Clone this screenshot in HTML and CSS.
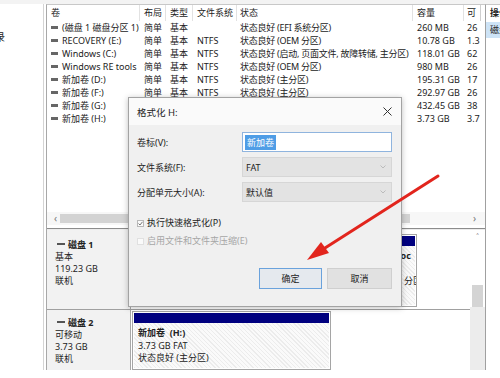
FILE: index.html
```html
<!DOCTYPE html>
<html lang="zh-CN">
<head>
<meta charset="utf-8">
<title>磁盘管理</title>
<link rel="stylesheet" href="styles.css">
</head>
<body>
<div class="topstrip"></div>
<div class="app">
  <aside class="nav"><span class="nav-text">录</span></aside>
  <main class="main">
    <section class="vols">
      <div class="grid head">
        <div class="c">卷</div><div class="c">布局</div><div class="c">类型</div><div class="c">文件系统</div><div class="c">状态</div><div class="c">容量</div><div class="c narrow">可</div>
      </div>
      <div class="grid row"><div class="c"><i class="vdash"></i>(磁盘 1 磁盘分区 1)</div><div class="c">简单</div><div class="c">基本</div><div class="c"></div><div class="c st">状态良好 (EFI 系统分区)</div><div class="c">260 MB</div><div class="c narrow">26</div></div>
      <div class="grid row"><div class="c"><i class="vdash"></i>RECOVERY (E:)</div><div class="c">简单</div><div class="c">基本</div><div class="c">NTFS</div><div class="c st">状态良好 (OEM 分区)</div><div class="c">10.78 GB</div><div class="c narrow">1.3</div></div>
      <div class="grid row"><div class="c"><i class="vdash"></i>Windows (C:)</div><div class="c">简单</div><div class="c">基本</div><div class="c">NTFS</div><div class="c st">状态良好 (启动, 页面文件, 故障转储, 主分区)</div><div class="c">118.01 GB</div><div class="c narrow">62</div></div>
      <div class="grid row"><div class="c"><i class="vdash"></i>Windows RE tools</div><div class="c">简单</div><div class="c">基本</div><div class="c">NTFS</div><div class="c st">状态良好 (OEM 分区)</div><div class="c">980 MB</div><div class="c narrow">26</div></div>
      <div class="grid row"><div class="c"><i class="vdash"></i>新加卷 (D:)</div><div class="c">简单</div><div class="c">基本</div><div class="c">NTFS</div><div class="c st">状态良好 (主分区)</div><div class="c">195.31 GB</div><div class="c narrow">17</div></div>
      <div class="grid row"><div class="c"><i class="vdash"></i>新加卷 (F:)</div><div class="c">简单</div><div class="c">基本</div><div class="c">NTFS</div><div class="c st">状态良好 (主分区)</div><div class="c">292.97 GB</div><div class="c narrow">26</div></div>
      <div class="grid row"><div class="c"><i class="vdash"></i>新加卷 (G:)</div><div class="c">简单</div><div class="c">基本</div><div class="c">NTFS</div><div class="c st">状态良好 (主分区)</div><div class="c">432.45 GB</div><div class="c narrow">38</div></div>
      <div class="grid row"><div class="c"><i class="vdash"></i>新加卷 (H:)</div><div class="c">简单</div><div class="c">基本</div><div class="c">FAT</div><div class="c st">状态良好 (主分区)</div><div class="c">3.73 GB</div><div class="c narrow">3.7</div></div>
    </section>
    <div class="hscroll"><span class="harr">‹</span><div class="hthumb"></div><span class="hspace"></span><span class="harr">›</span></div>
    <div class="split"></div>
    <section class="disks">
      <div class="disklist">
        <div class="disk d1">
          <div class="dlabel"><div class="dname"><i class="ddash"></i>磁盘 1</div><div>基本</div><div>119.23 GB</div><div>联机</div></div>
          <div class="parts">
            <div class="part pwide"><div class="pbar"></div><div class="pbody"><b>新加卷 (G:)</b><br>432.45 GB NTFS<br>状态良好 (主分区)</div></div>
            <div class="part pthin"><div class="pbar"></div><div class="pbody shift"><b>Doc</b><br>&nbsp;<br><span class="sh2">分区)</span></div></div>
          </div>
        </div>
        <div class="disk d2">
          <div class="dlabel"><div class="dname"><i class="ddash"></i>磁盘 2</div><div>可移动</div><div>3.73 GB</div><div>联机</div></div>
          <div class="parts">
            <div class="part pmain"><div class="pbar"></div><div class="pbody"><b>新加卷&nbsp; (H:)</b><br>3.73 GB FAT<br>状态良好 (主分区)</div></div>
          </div>
        </div>
      </div>
      <div class="vscroll"><span class="vup">˄</span><div class="vthumb"></div><div class="vfade"></div></div>
    </section>
  </main>
  <aside class="actions"><div class="ah">操作</div><div class="asel">磁盘管理</div></aside>
</div>

<div class="dialog">
  <div class="dtitle"><span>格式化 H:</span>
    <svg class="close" width="9" height="9" viewBox="0 0 9 9"><path d="M0.5 0.5 L8.5 8.5 M8.5 0.5 L0.5 8.5" stroke="#333" stroke-width="1" fill="none"/></svg>
  </div>
  <div class="dbody">
    <div class="field"><label>卷标(V):</label><div class="input"><span class="selected">新加卷</span></div></div>
    <div class="field"><label>文件系统(F):</label><div class="select"><span>FAT</span><svg width="6" height="4" viewBox="0 0 6 4"><path d="M0.5 0.5 L3 3 L5.5 0.5" stroke="#bbb" fill="none"/></svg></div></div>
    <div class="field"><label>分配单元大小(A):</label><div class="select"><span>默认值</span><svg width="6" height="4" viewBox="0 0 6 4"><path d="M0.5 0.5 L3 3 L5.5 0.5" stroke="#bbb" fill="none"/></svg></div></div>
    <div class="checks">
      <div class="chk"><span class="box on"><svg width="5" height="5" viewBox="0 0 5 5"><path d="M0.5 2.5 L2 4 L4.5 0.8" stroke="#555" fill="none" stroke-width="0.8"/></svg></span>执行快速格式化(P)</div>
      <div class="chk dis"><span class="box"></span>启用文件和文件夹压缩(E)</div>
    </div>
    <div class="btns"><button class="btn ok">确定</button><button class="btn cancel">取消</button></div>
  </div>
</div>

<svg class="arrow" width="500" height="378" viewBox="0 0 500 378">
  <line x1="438" y1="176" x2="325" y2="248" stroke="#e2251d" stroke-width="3" stroke-linecap="round"/>
  <polygon points="307,260 329,253 321,242" fill="#e2251d"/>
</svg>
</body>
</html>
```

FILE: styles.css
```css
body {
  margin: 0;
  width: 500px;
  height: 378px;
  overflow: hidden;
  background: #fff;
  font-family: "Noto Sans", "Noto Sans CJK SC", sans-serif;
  font-size: 9px;
  color: #222;
  position: relative;
}

.topstrip { height: 4px; background: #f3f3f3; }

.app { display: flex; height: 366px; }

.nav {
  width: 43px;
  flex: none;
  border-right: 1px solid #d4d4d4;
  margin-right: 2px;
  overflow: hidden;
}
.nav-text { display: block; margin: 26px 0 0 -5px; font-size: 10px; line-height: 14px; }

.main {
  flex: 0 0 439px;
  box-sizing: border-box;
  border-left: 1px solid #a8a8a8;
  border-top: 1px solid #c8c8c8;
  display: flex;
  flex-direction: column;
}

.vols { height: 207px; overflow: hidden; }
.grid { display: grid; grid-template-columns: 93px 26px 27px 44px 176px 51px 17px; }
.c {
  box-sizing: border-box;
  padding-left: 4px;
  white-space: nowrap;
  overflow: hidden;
}
.c.narrow { padding-left: 3px; }
.c.st { padding-left: 3px; letter-spacing: -0.25px; }
.head .c:nth-child(5) { padding-left: 3px; }
.head { height: 16px; }
.head .c { line-height: 16px; border-right: 1px solid #e2e2e2; }
.head .c.narrow { border-right: 1px solid #cfcfcf; }
.row { height: 13px; line-height: 13px; }
.vdash {
  display: inline-block;
  width: 7px;
  height: 3px;
  background: #666;
  margin-right: 4px;
  vertical-align: 2px;
}

.hscroll {
  height: 13px;
  display: flex;
  align-items: center;
  padding: 0 6px 0 4px;
  background: #f7f7f7;
}
.harr { width: 9px; font-size: 10px; color: #777; text-align: center; line-height: 13px; }
.hthumb { width: 350px; height: 9px; background: #d3d3d3; }
.hspace { flex: 1; }

.split {
  height: 5px;
  box-sizing: border-box;
  border-top: 3px solid #fff;
  border-bottom: 1px solid #ececec;
  background: #8c8c8c;
}

.disks { height: 140px; display: flex; overflow: hidden; }
.disklist { flex: 1; display: flex; flex-direction: column; }
.disk { display: flex; }
.d1 { height: 79px; border-bottom: 1px solid #a0a0a0; flex: none; }
.d2 { flex: 1; }
.dlabel {
  width: 84px;
  flex: none;
  box-sizing: border-box;
  background: #f2f2f2;
  border-right: 1px solid #a8a8a8;
  padding: 9px 0 0 8px;
  line-height: 12px;
}
.d2 .dlabel { padding-top: 7px; }
.dname { font-weight: bold; }
.ddash {
  display: inline-block;
  width: 8px;
  height: 2px;
  background: #555;
  margin: 0 3px 0 2px;
  vertical-align: 3px;
}

.parts { flex: 1; display: flex; gap: 1px; padding: 4px 0 2px 3px; overflow: hidden; }
.d2 .parts { padding: 1px 0 0 1px; }
.part {
  box-sizing: border-box;
  border: 1px solid #a5a5a5;
  padding: 1px;
  display: flex;
  flex-direction: column;
  overflow: hidden;
  flex: none;
}
.pwide { width: 264px; }
.pthin { width: 18px; }
.pmain { width: 199px; }
.pbar { height: 10px; background: #00007f; flex: none; }
.pbody {
  flex: 1;
  padding: 4px 0 0 4px;
  line-height: 12.5px;
  white-space: nowrap;
  background: repeating-linear-gradient(45deg, #ececec 0 1px, #fafafa 1px 3px);
}
.pbody.shift { padding-left: 0; margin-left: -7px; }
.sh2 { margin-left: 10px; }

.vscroll {
  width: 15px;
  flex: none;
  display: flex;
  flex-direction: column;
  align-items: center;
}
.vup { height: 12px; line-height: 14px; font-size: 9px; color: #666; margin-bottom: 43px; }
.vthumb { width: 11px; height: 22px; background: #d4d4d4; flex: none; }
.vfade { width: 15px; flex: 1; background: #ececec; }

.actions {
  flex: 1;
  border-left: 1px solid #a0a0a0;
  border-top: 1px solid #c8c8c8;
  overflow: hidden;
  white-space: nowrap;
}
.ah { height: 16px; line-height: 16px; font-weight: bold; padding-left: 4px; }
.asel { margin-top: 1px; height: 16px; line-height: 16px; padding-left: 4px; background: #cde3f6; }

.dialog {
  position: absolute;
  left: 128px;
  top: 97px;
  width: 274px;
  height: 210px;
  box-sizing: border-box;
  border: 1px solid #a3a3a3;
  box-shadow: 0 1px 6px rgba(0, 0, 0, 0.25);
  background: #f0f0f0;
  display: flex;
  flex-direction: column;
}
.dtitle {
  height: 27px;
  flex: none;
  background: #fafafa;
  display: flex;
  align-items: center;
  justify-content: space-between;
  padding: 0 9px 0 8px;
  font-size: 9.5px;
}
.close { display: block; }
.dbody { padding: 7px 9px 0 8px; }
.field { display: flex; align-items: center; height: 20px; margin-bottom: 5px; }
.field label { width: 105px; flex: none; }
.input, .select {
  width: 150px;
  height: 20px;
  box-sizing: border-box;
  display: flex;
  align-items: center;
}
.input { background: #fff; border: 1px solid #8fb4de; padding-left: 2px; }
.selected { background: #4f9de6; color: #fff; padding: 0 2px; line-height: 15px; }
.select {
  background: #e3e3e3;
  border: 1px solid #d6d6d6;
  padding: 0 5px 0 3px;
  justify-content: space-between;
}
.checks { margin-top: 15px; display: flex; flex-direction: column; gap: 6px; }
.chk { height: 12px; line-height: 12px; display: flex; align-items: center; }
.box {
  width: 7px;
  height: 7px;
  box-sizing: border-box;
  border: 1px solid #b8b8b8;
  background: #fafafa;
  margin-right: 3px;
  display: flex;
  align-items: center;
  justify-content: center;
}
.chk.dis { color: #a6a6a6; }
.chk.dis .box { border-color: #e0e0e0; }
.btns { display: flex; justify-content: flex-end; gap: 5px; margin-top: 21px; }
.btn {
  height: 21px;
  box-sizing: border-box;
  font: inherit;
  color: #222;
  padding: 0;
  background: #e1e1e1;
  border: 1px solid #cfcfcf;
}
.btn.ok { width: 63px; border-color: #6aa2dc; background: #e5e9ee; }
.btn.cancel { width: 65px; }

.arrow { position: absolute; left: 0; top: 0; pointer-events: none; }
```
